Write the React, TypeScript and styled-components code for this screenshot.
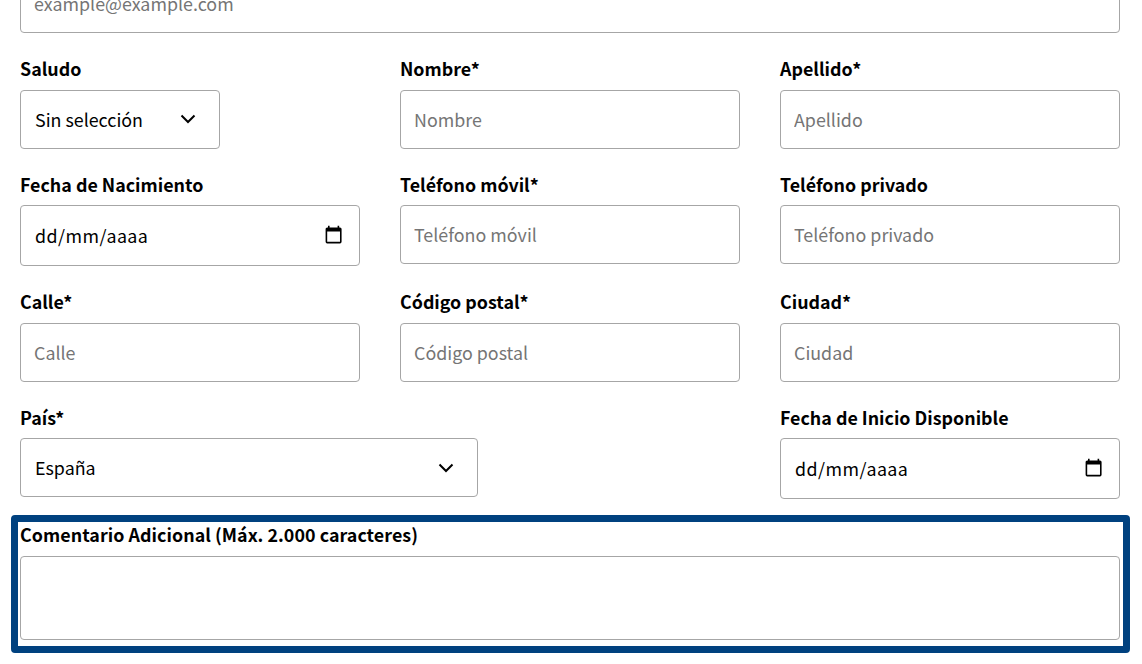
import React from 'react';
import styled, { createGlobalStyle } from 'styled-components';

const GlobalStyle = createGlobalStyle`
  html, body {
    margin: 0;
    padding: 0;
    height: 664px;
    overflow: hidden;
    background: #fff;
  }
  body {
    font-family: 'Noto Sans CJK JP', 'Noto Sans', sans-serif;
    color: #000;
  }
`;

const ChevronIcon = () => (
  <ChevronSvg viewBox="0 0 16 10" aria-hidden="true">
    <path d="M1.5 1.5 8 8l6.5-6.5" fill="none" stroke="#000" strokeWidth="2" />
  </ChevronSvg>
);

const CalendarIcon = () => (
  <CalendarSvg viewBox="0 0 24 24" aria-hidden="true">
    <path d="M20 3h-1V1h-2v2H7V1H5v2H4c-1.1 0-2 .9-2 2v16c0 1.1.9 2 2 2h16c1.1 0 2-.9 2-2V5c0-1.1-.9-2-2-2zm0 18H4V8h16v13z" />
  </CalendarSvg>
);

interface TextFieldProps {
  label: string;
  placeholder?: string;
}

const TextField: React.FC<TextFieldProps> = ({ label, placeholder }) => (
  <Field>
    <Label>{label}</Label>
    <Input type="text" placeholder={placeholder} />
  </Field>
);

const DateField: React.FC<{ label: string }> = ({ label }) => (
  <Field>
    <Label>{label}</Label>
    <ControlWrap>
      <DateInput type="text" placeholder="dd/mm/aaaa" />
      <CalendarIcon />
    </ControlWrap>
  </Field>
);

const SelectField: React.FC<{ label: string; value: string; width: number }> = ({ label, value, width }) => (
  <Field $width={width}>
    <Label>{label}</Label>
    <ControlWrap>
      <Select defaultValue={value}>
        <option>{value}</option>
      </Select>
      <ChevronIcon />
    </ControlWrap>
  </Field>
);

export default function App() {
  return (
    <>
      <GlobalStyle />
      <Form>
        <EmailInput type="email" placeholder="example@example.com" />
        <Row>
          <SelectField label="Saludo" value="Sin selección" width={200} />
          <Spacer $width={140} />
          <TextField label="Nombre*" placeholder="Nombre" />
          <TextField label="Apellido*" placeholder="Apellido" />
        </Row>
        <Row>
          <DateField label="Fecha de Nacimiento" />
          <TextField label="Teléfono móvil*" placeholder="Teléfono móvil" />
          <TextField label="Teléfono privado" placeholder="Teléfono privado" />
        </Row>
        <Row>
          <TextField label="Calle*" placeholder="Calle" />
          <TextField label="Código postal*" placeholder="Código postal" />
          <TextField label="Ciudad*" placeholder="Ciudad" />
        </Row>
        <LastRow>
          <SelectField label="País*" value="España" width={458} />
          <DateField label="Fecha de Inicio Disponible" />
        </LastRow>
        <Highlight>
          <CommentLabel>Comentario Adicional (Máx. 2.000 caracteres)</CommentLabel>
          <TextArea />
        </Highlight>
      </Form>
    </>
  );
}

const Form = styled.form`
  display: flex;
  flex-direction: column;
  width: 1100px;
  margin: -25.8px 0 0 20px;
`;

const Row = styled.div`
  display: flex;
  align-items: flex-start;
  column-gap: 40px;
  margin-top: 23px;
`;

const LastRow = styled(Row)`
  justify-content: space-between;
`;

const Field = styled.div<{ $width?: number }>`
  display: flex;
  flex-direction: column;
  flex: none;
  width: ${(props) => props.$width ?? 340}px;
`;

const Spacer = styled.div<{ $width: number }>`
  flex: none;
  width: ${(props) => props.$width - 40}px;
`;

const Label = styled.label`
  display: block;
  height: 24px;
  margin-bottom: 9.5px;
  font-size: 17.85px;
  font-weight: 700;
  line-height: 24px;
  white-space: nowrap;
`;

const CommentLabel = styled(Label)`
  margin-bottom: 10px;
  letter-spacing: 0.05px;
`;

const Input = styled.input`
  box-sizing: border-box;
  width: 100%;
  height: 59px;
  padding: 0 14px 1.4px 13px;
  border: 1px solid #a6a6a6;
  border-radius: 4px;
  background: #fff;
  font-family: inherit;
  font-size: 17.85px;
  color: #000;
  outline: none;

  &::placeholder {
    color: #757575;
    opacity: 1;
  }
`;

const EmailInput = styled(Input)`
  flex: none;
  padding: 0 14px 1px 13px;
`;

const DateInput = styled(Input)`
  height: 61px;
  padding-left: 14px;
  letter-spacing: 0.45px;

  &::placeholder {
    color: #000;
  }
`;

const ControlWrap = styled.div`
  position: relative;
  width: 100%;
`;

const Select = styled.select`
  display: block;
  box-sizing: border-box;
  width: 100%;
  height: 59px;
  padding: 0 14px 0.6px;
  border: 1px solid #a6a6a6;
  border-radius: 4px;
  background: #fff;
  appearance: none;
  font-family: inherit;
  font-size: 17.85px;
  color: #000;
  outline: none;
`;

const ChevronSvg = styled.svg`
  position: absolute;
  top: 24.3px;
  right: 24px;
  width: 16px;
  height: 10px;
  pointer-events: none;
`;

const CalendarSvg = styled.svg`
  position: absolute;
  top: 20px;
  right: 17px;
  width: 19.2px;
  height: 19.2px;
  pointer-events: none;
`;

const Highlight = styled.div`
  box-sizing: border-box;
  display: flex;
  flex-direction: column;
  flex: none;
  width: 1119px;
  height: 138px;
  margin: 16px 0 0 -9px;
  padding: 0 2px 6px 2px;
  border: 7px solid #00417f;
  border-radius: 4px;
`;

const TextArea = styled.textarea`
  box-sizing: border-box;
  display: block;
  width: 1100px;
  height: 84px;
  border: 1px solid #a6a6a6;
  border-radius: 4px;
  resize: none;
  outline: none;
  background: #fff;
`;
